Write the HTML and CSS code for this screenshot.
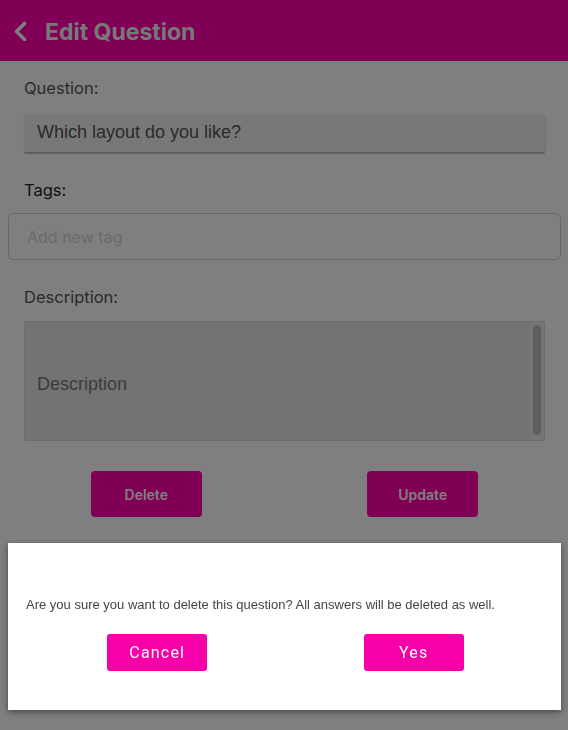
FILE: index.html
```html
<!DOCTYPE html>
<html lang="en">
<head>
<meta charset="utf-8">
<title>Edit Question</title>
<link rel="stylesheet" href="styles.css">
</head>
<body>
<header class="topbar">
  <svg class="back" width="16" height="20" viewBox="0 0 16 20" aria-hidden="true">
    <polyline points="11.5,2.5 3.5,10.5 11.5,18.5" fill="none" stroke="#ffffff" stroke-width="3.6" stroke-linecap="round" stroke-linejoin="round"/>
  </svg>
  <h1 class="title">Edit Question</h1>
</header>

<main class="form">
  <div class="label label-question">Question:</div>
  <div class="field field-question">Which layout do you like?</div>

  <div class="label label-tags">Tags:</div>
  <div class="field-tags">Add new tag</div>

  <div class="label label-desc">Description:</div>
  <div class="field-desc">
    <div class="desc-text">Description</div>
    <div class="scroll-track"><div class="scroll-thumb"></div></div>
  </div>

  <div class="actions">
    <button class="btn-action">Delete</button>
    <button class="btn-action">Update</button>
  </div>
</main>

<div class="backdrop">
  <div class="modal">
    <p class="modal-text">Are you sure you want to delete this question? All answers will be deleted as well.</p>
    <div class="modal-actions">
      <button class="btn-modal">Cancel</button>
      <button class="btn-modal">Yes</button>
    </div>
  </div>
</div>
</body>
</html>
```

FILE: styles.css
```css
* { box-sizing: border-box; }

html, body {
  margin: 0;
  padding: 0;
  background: #ffffff;
  width: 568px;
  height: 730px;
  overflow: hidden;
}

body {
  font-family: "Liberation Sans", Arial, sans-serif;
}

.topbar {
  height: 61px;
  background: #fe00a8;
  display: flex;
  align-items: center;
  padding-left: 13px;
}

.back {
  display: block;
  margin-top: 1px;
}

.title {
  margin: 3px 0 0 16px;
  font-family: Inter, "Liberation Sans", sans-serif;
  font-size: 23px;
  font-weight: 700;
  color: #f0f0f0;
  line-height: 1;
}

.form {
  display: flex;
  flex-direction: column;
}

.label {
  font-family: Inter, "Liberation Sans", sans-serif;
  font-size: 16.5px;
  line-height: 20px;
  height: 20px;
  margin-left: 24px;
  color: #555555;
}

.label-question { margin-top: 17px; }
.label-tags { margin-top: 28px; color: #222222; }
.label-desc { margin-top: 27px; }

.field-question {
  margin: 15px 23px 0 24px;
  height: 39px;
  background: #f0f0f0;
  border-radius: 2px 4px 2px 2px;
  box-shadow: 0 2px 1px rgba(0, 0, 0, 0.25), 1px 0 1px rgba(0, 0, 0, 0.08);
  display: flex;
  align-items: center;
  padding-left: 13px;
  font-size: 18px;
  color: #555555;
}

.field-tags {
  margin: 13px 7px 0 8px;
  height: 47px;
  border: 1px solid #d2d2d2;
  border-radius: 5px;
  display: flex;
  align-items: center;
  padding-left: 18px;
  font-family: Inter, "Liberation Sans", sans-serif;
  font-size: 16px;
  color: #d6d6d6;
}

.field-desc {
  margin: 14px 23px 0 24px;
  height: 120px;
  background: #e6e6e6;
  border: 1px solid #dadada;
  border-radius: 2px;
  display: flex;
}

.desc-text {
  flex: 1;
  display: flex;
  align-items: center;
  padding: 6px 0 0 12px;
  font-size: 18px;
  color: #777777;
}

.scroll-track {
  width: 14px;
  background: #eaeaea;
  padding: 3px 3px 5px 3px;
}

.scroll-thumb {
  width: 8px;
  height: 100%;
  background: #bcbcbc;
  border-radius: 4px;
}

.actions {
  margin: 30px 7px 0 8px;
  display: flex;
  justify-content: space-around;
}

.btn-action {
  width: 111px;
  height: 46px;
  border: none;
  border-radius: 4px;
  background: #fe00a8;
  color: #ffffff;
  font-family: Inter, "Liberation Sans", sans-serif;
  font-size: 14px;
  font-weight: 600;
  padding: 0;
}

.backdrop {
  position: fixed;
  inset: 0;
  background: rgba(0, 0, 0, 0.5);
  display: flex;
  flex-direction: column;
  justify-content: flex-end;
  padding: 0 7px 20px 8px;
}

.modal {
  height: 167px;
  background: #ffffff;
  box-shadow: 0 2px 6px rgba(0, 0, 0, 0.45);
  padding: 54px 19px 0 18px;
}

.modal-text {
  margin: 0;
  text-align: left;
  white-space: nowrap;
  font-size: 13px;
  line-height: 16px;
  color: #444444;
}

.modal-actions {
  margin: 21px 0 0 3px;
  display: flex;
  justify-content: space-around;
}

.btn-modal {
  width: 100px;
  height: 37px;
  border: none;
  border-radius: 3px;
  background: #f700a8;
  color: #ffffff;
  font-family: Roboto, "Liberation Sans", sans-serif;
  font-size: 16px;
  font-weight: 400;
  letter-spacing: 1.2px;
  padding: 0;
}
```
